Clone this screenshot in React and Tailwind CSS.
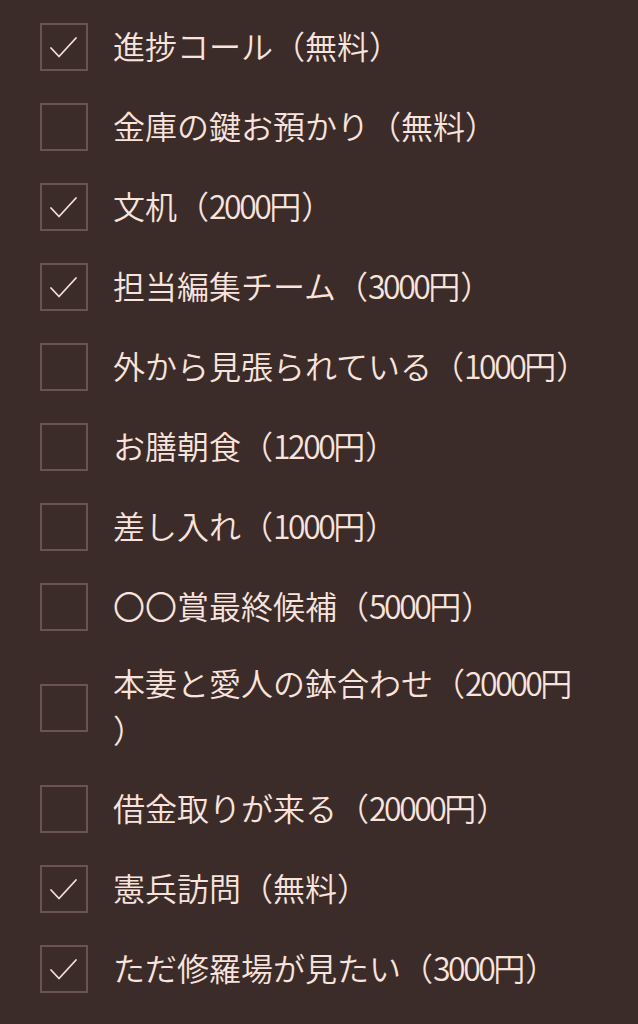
import React from "react";

const items = [
  { label: "進捗コール（無料）", checked: true },
  { label: "金庫の鍵お預かり（無料）", checked: false },
  { label: "文机（2000円）", checked: true },
  { label: "担当編集チーム（3000円）", checked: true },
  { label: "外から見張られている（1000円）", checked: false },
  { label: "お膳朝食（1200円）", checked: false },
  { label: "差し入れ（1000円）", checked: false },
  { label: "〇〇賞最終候補（5000円）", checked: false },
  // the original wraps the closing bracket on its own line
  { label: "本妻と愛人の鉢合わせ（20000円\n）", checked: false },
  { label: "借金取りが来る（20000円）", checked: false },
  { label: "憲兵訪問（無料）", checked: true },
  { label: "ただ修羅場が見たい（3000円）", checked: true },
];

const CheckBox = ({ checked }) => (
  <div className="w-12 h-12 shrink-0 border-2 border-[#6b5450] flex items-center justify-center">
    {checked && (
      <svg width="48" height="48" viewBox="0 0 48 48" className="-m-[2px]">
        <path
          d="M11 25 L19 33.5 L36 15"
          fill="none"
          stroke="#f5dcd6"
          strokeWidth="1.8"
          strokeLinecap="round"
          strokeLinejoin="round"
        />
      </svg>
    )}
  </div>
);

// digits in the original are narrower than the CJK font's figures
const Line = ({ text }) =>
  text.split(/(\d+)/).map((part, i) =>
    /^\d+$/.test(part) ? (
      <span key={i} className="tracking-[-2.5px]">
        {part}
      </span>
    ) : (
      part
    )
  );

export default function App() {
  return (
    <div
      className="min-h-screen w-[638px] bg-[#3c2c29] text-[#f8e3dd] pt-[7px] pl-10 pr-10"
      style={{ fontFamily: '"Noto Sans CJK JP", sans-serif' }}
    >
      {items.map((item) => (
        <div key={item.label} className="flex items-center gap-[25px] py-4">
          <CheckBox checked={item.checked} />
          <div className="text-[32px] leading-[47px] font-[350] flex-1 min-w-0 -mt-1">
            {item.label.split("\n").map((line, i) => (
              <div key={i} className="whitespace-nowrap">
                <Line text={line} />
              </div>
            ))}
          </div>
        </div>
      ))}
    </div>
  );
}
